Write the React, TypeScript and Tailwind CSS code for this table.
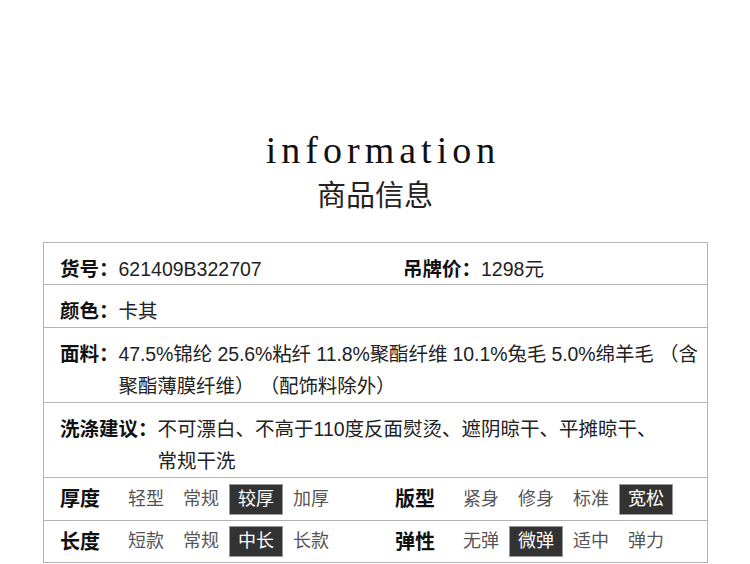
import React from "react";

const sans = { fontFamily: '"Liberation Sans", "Noto Sans CJK SC", sans-serif' };

function Opt({ text, active }: { text: string; active?: boolean }) {
  return (
    <div
      className={
        "w-[54px] h-[31px] flex items-center justify-center border text-[18px] " +
        (active ? "bg-[#333333] border-[#9a9a9a] text-white" : "border-transparent text-[#555555]")
      }
    >
      {text}
    </div>
  );
}

function OptRow({ label, opts, active }: { label: string; opts: string[]; active: number }) {
  return (
    <div className="flex items-center">
      <div className="w-[59px] text-[20px] font-bold text-[#111111]">{label}</div>
      <div className="flex gap-px">
        {opts.map((o, i) => (
          <Opt key={o} text={o} active={i === active} />
        ))}
      </div>
    </div>
  );
}

export default function App() {
  return (
    <div className="w-[750px] h-[564px] bg-white overflow-hidden" style={sans}>
      <div className="pt-[131px] flex flex-col items-center">
        <div
          className="ml-[16px] text-[38px] leading-none text-[#111111] tracking-[5px]"
          style={{ fontFamily: '"Liberation Serif", serif' }}
        >
          information
        </div>
        <div
          className="mt-[10px] text-[29px] leading-none text-[#222222]"
          style={{ fontFamily: '"Noto Sans CJK SC", sans-serif' }}
        >
          商品信息
        </div>
      </div>
      <div className="mt-[34px] ml-[43px] w-[665px] border border-[#b4b4b4] text-[19.5px] text-[#222222]">
        <div className="h-[42px] border-b border-[#b4b4b4] pl-[16px] pt-[10px] leading-[32px] flex">
          <div className="w-[343px] flex">
            <span className="font-bold text-[#111111]">货号：</span>
            <span>621409B322707</span>
          </div>
          <div className="flex">
            <span className="font-bold text-[#111111]">吊牌价：</span>
            <span>1298元</span>
          </div>
        </div>
        <div className="h-[43px] border-b border-[#b4b4b4] pl-[16px] pt-[10px] leading-[32px] flex">
          <span className="font-bold text-[#111111]">颜色：</span>
          <span>卡其</span>
        </div>
        <div className="h-[75px] border-b border-[#b4b4b4] pl-[16px] pt-[10px] leading-[32px] flex">
          <span className="font-bold text-[#111111] shrink-0">面料：</span>
          <div className="whitespace-nowrap tracking-[-0.1px]">
            47.5%锦纶 25.6%粘纤 11.8%聚酯纤维 10.1%兔毛 5.0%绵羊毛 （含
            <br />
            聚酯薄膜纤维） （配饰料除外）
          </div>
        </div>
        <div className="h-[75px] border-b border-[#b4b4b4] pl-[16px] pt-[10px] leading-[32px] flex">
          <span className="font-bold text-[#111111] shrink-0">洗涤建议：</span>
          <div className="whitespace-nowrap">
            不可漂白、不高于110度反面熨烫、遮阴晾干、平摊晾干、
            <br />
            常规干洗
          </div>
        </div>
        <div className="h-[43px] border-b border-[#b4b4b4] pl-[16px] flex items-center">
          <div className="w-[335px]">
            <OptRow label="厚度" opts={["轻型", "常规", "较厚", "加厚"]} active={2} />
          </div>
          <OptRow label="版型" opts={["紧身", "修身", "标准", "宽松"]} active={3} />
        </div>
        <div className="h-[41px] pl-[16px] flex items-center">
          <div className="w-[335px]">
            <OptRow label="长度" opts={["短款", "常规", "中长", "长款"]} active={2} />
          </div>
          <OptRow label="弹性" opts={["无弹", "微弹", "适中", "弹力"]} active={1} />
        </div>
      </div>
    </div>
  );
}
